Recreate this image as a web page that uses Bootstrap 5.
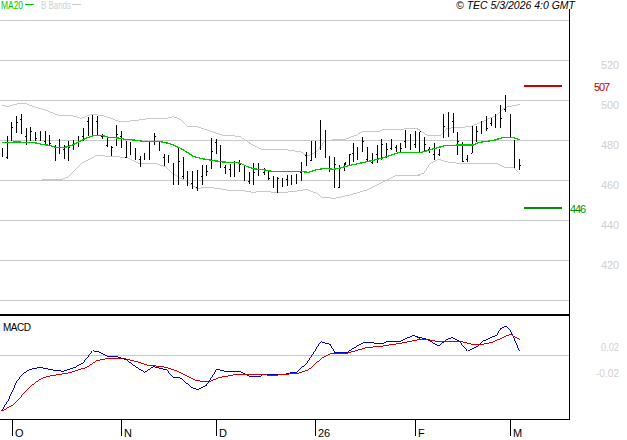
<!DOCTYPE html>
<html lang="en">
<head>
<meta charset="utf-8">
<title>TEC chart</title>
<link href="https://cdn.jsdelivr.net/npm/bootstrap@5.3.0/dist/css/bootstrap.min.css" rel="stylesheet">
<style>
html,body{background:#fff;margin:0;overflow:hidden}
.chart-frame{width:627px;height:440px}
.chart-svg{width:627px;height:440px}
.chart-svg text{font-family:"Liberation Sans",Arial,sans-serif;font-size:11px}
.chart-svg .lineart{shape-rendering:crispEdges;fill:none}
.chart-svg .tx-small{font-size:10px}
.tx-grey{fill:#d0d0d0}
.tx-black{fill:#000}
.grid-ln{stroke:#c8c8c8;stroke-width:1}
.ax-ln{stroke:#000;stroke-width:1}
.ax-thick{stroke:#000;stroke-width:2}
.band{stroke:#c8c8c8;stroke-width:3;fill:none}
.ma{stroke:#00c800;stroke-width:3.9;fill:none}
.blue-ln{stroke:#0000c8;stroke-width:3;fill:none}
.red-ln{stroke:#c80000;stroke-width:3;fill:none}
.bars{stroke:#000;stroke-width:3;fill:none}
</style>
</head>
<body>
<div class="container-fluid p-0 chart-frame">
<svg class="chart-svg d-block" viewBox="0 0 627 440" xmlns="http://www.w3.org/2000/svg">
  <g class="lineart">
    <path class="grid-ln" d="M0 20.5H569M0 60.5H569M0 100.5H569M0 140.5H569M0 180.5H569M0 220.5H569M0 260.5H569M0 300.5H569M0 355.5H569"/>
    <!-- upper band -->
    <g transform="scale(.3333)"><polyline class="band" points="5,316 22,320 50,312 75,310 100,320 135,330 175,346 215,347 245,355 275,343 310,347 360,365 405,362 450,355 500,355 520,350 540,358 560,378 590,380 630,393"/></g>
    <g transform="translate(210 0) scale(.3333)"><polyline class="band" points="0,393 40,406 90,409 120,430 155,448 185,449"/><polyline class="band" points="365,418 405,418 440,405 460,394 510,394 515,390 565,390 600,384 630,388"/></g>
    <g transform="translate(210 130) scale(.3333)"><polyline class="band" points="115,38 155,58 220,58 270,65 295,78 320,65 345,32"/></g>
    <g transform="translate(417 0) scale(.3333)"><polyline class="band" points="0,387 30,405 70,408 90,385 160,380 190,368 240,345 265,322 310,313"/></g>
    <!-- lower band -->
    <g transform="translate(0 130) scale(.3333)"><polyline class="band" points="45,152 87,152 145,149 185,149 205,140 245,100 290,76 340,80 380,82 420,102 465,100 500,112 520,132 560,155 590,175 630,172"/></g>
    <g transform="translate(210 130) scale(.3333)"><polyline class="band" points="0,172 50,180 100,182 130,187 160,184 205,188 250,185 290,178 320,190 335,202 375,205 420,195 470,180 520,155 555,138 600,136 630,136"/></g>
    <g transform="translate(417 130) scale(.3333)"><polyline class="band" points="0,136 20,130 40,100 65,88 95,97 150,102 240,100 262,112 290,114 310,133"/></g>
    <!-- price bars -->
    <g transform="translate(0 108) scale(.3333)"><path class="bars" d="M8 120V147M5 142h3M22 83V152M19 150h3M36 43V98M33 98h3M36 60h3M51 25V76M51 45h3M64 18V77M61 35h3M64 55h3M79 60V112M76 85h3M93 58V98M93 70h3M90 85h3M108 72V100M105 82h3M108 92h3M122 70V98M119 85h3M136 70V115M133 100h3M150 82V112M147 98h3M150 108h3M166 110V158M163 118h3M180 92V138M177 110h3M193 110V152M190 125h3M207 100V158M204 148h3M207 118h3M222 97V125M219 105h3M236 85V118M233 100h3M250 60V100M247 85h3M265 27V85M265 70h3M262 40h3M278 22V85M275 40h3M292 25V85M289 42h3M307 78V92M304 85h3M322 85V118M319 112h3M322 98h3M335 115V143M335 120h3M350 52V112M347 112h3M350 80h3M364 68V120M361 85h3M364 100h3M379 100V150M376 148h3M379 118h3M392 102V140M389 125h3M407 120V155M404 140h3M421 145V178M418 155h3M421 158h3M435 135V155M432 148h3M449 100V155M446 155h3M464 75V112M461 100h3M464 85h3M478 100V128M475 100h3M478 118h3M493 138V175M490 148h3M507 142V165M504 155h3M521 165V230M518 170h3M536 120V230M533 215h3M536 160h3"/></g>
    <g transform="translate(170 108) scale(.3333)"><path class="bars" d="M40 148V212M37 205h3M40 160h3M53 190V235M50 225h3M67 190V243M67 210h3M64 228h3M82 185V248M79 238h3M97 170V230M94 205h3M110 170V205M107 180h3M110 190h3M125 90V182M122 180h3M125 130h3M139 92V138M136 105h3M152 112V180M149 112h3M166 170V197M163 180h3M181 168V207M178 185h3M195 160V207M192 180h3M209 157V192M206 185h3M209 170h3M223 172V220M223 210h3M238 192V228M235 220h3M252 165V230M249 225h3M252 195h3M266 165V205M263 195h3M283 180V200M280 195h3M296 187V217M296 213h3M311 205V240M308 222h3M323 207V255M323 212h3M338 210V237M335 215h3M352 200V235M349 215h3M366 200V230M363 212h3M380 197V228M377 212h3M394 162V218M391 195h3M409 132V175M406 142h3M409 158h3M424 100V160M421 158h3M424 102h3M438 100V150M435 132h3M451 37V125M451 65h3M466 65V150M466 148h3M480 145V192M477 152h3M494 148V240M491 240h3M494 170h3M508 170V240M505 238h3M523 165V190M523 175h3M538 140V175M535 172h3"/></g>
    <g transform="translate(345 90) scale(.3333)"><path class="bars" d="M0 215V225M-3 222h3M14 192V228M11 222h3M14 195h3M25 158V215M22 190h3M39 172V210M36 185h3M53 140V187M53 155h3M50 180h3M67 172V215M64 210h3M82 188V223M79 218h3M82 195h3M97 165V220M94 195h3M111 148V210M108 205h3M111 165h3M125 160V205M125 180h3M139 148V180M136 175h3M139 160h3M154 165V187M151 172h3M167 160V185M167 175h3M181 120V175M178 155h3M196 132V180M196 142h3M211 123V175M208 165h3M211 140h3M225 125V185M222 180h3M225 125h3M239 142V185M239 165h3M253 170V190M250 180h3M268 158V210M265 195h3M268 162h3M283 178V198M280 195h3M297 72V145M294 140h3M297 110h3M311 67V142M308 95h3M325 68V130M322 95h3M339 127V195M339 155h3M353 155V215M353 215h3M350 170h3M367 195V217M364 210h3M382 108V190M379 190h3M396 107V157M396 125h3M410 92V132M407 105h3M425 77V122M425 115h3M439 85V108M436 100h3M453 72V115M450 100h3M467 45V115M464 55h3M467 85h3M481 15V67M478 60h3M481 50h3M496 72V140M496 135h3M510 150V235M507 222h3M524 208V240M521 235h3M524 228h3"/></g>
    <!-- MA20 -->
    <g transform="translate(0 108) scale(.3333)"><polyline class="ma" points="5,103 20,104 45,102 85,103 110,105 130,110 150,112 165,118 195,118 215,112 240,100 265,88 285,82 305,82 325,88 355,90 375,94 400,96 430,100 480,101 510,107 540,120"/></g>
    <g transform="translate(170 108) scale(.3333)"><polyline class="ma" points="25,117 50,132 70,145 95,152 125,157 160,162 210,165 230,175 255,183 285,186 305,190 390,190 415,193 440,185 465,181 490,184 515,179 540,172"/></g>
    <g transform="translate(345 90) scale(.3333)"><polyline class="ma" points="15,226 35,222 80,212 110,205 135,197 165,187 230,187 270,175 300,167 345,165 385,165 400,158 450,150 475,142 505,142 523,150"/></g>
    <!-- MACD -->
    <g transform="translate(0 310) scale(.3333)">
      <polyline class="red-ln" points="5,303 40,285 90,230 125,205 150,198 210,188 260,172 290,152 320,146 375,146 420,158 445,166 490,170 530,182 590,212 630,216"/>
      <polyline class="blue-ln" points="5,303 25,270 50,215 70,190 90,178 120,172 160,180 190,184 225,172 250,158 278,122 300,127 325,140 350,140 380,150 410,172 435,187 460,170 500,180 520,202 540,203 580,236 595,238 620,225 630,210"/>
    </g>
    <g transform="translate(210 310) scale(.3333)">
      <polyline class="blue-ln" points="0,210 20,178 55,186 90,184 115,198 150,199 160,193 225,193 235,190 260,186 290,160 310,130 332,95 360,103 375,128 410,128 430,115 460,98 520,100 530,94 570,94 610,76 630,85"/>
      <polyline class="red-ln" points="0,214 30,202 70,195 135,194 155,193 185,197 225,193 265,190 295,180 335,145 365,130 410,130 470,113 520,108 570,100 610,92 630,88"/>
    </g>
    <g transform="translate(417 310) scale(.3333)">
      <polyline class="blue-ln" points="0,80 30,88 65,108 90,88 107,83 125,92 152,124 180,110 195,95 240,75 250,57 265,48 280,60 308,124"/>
      <polyline class="red-ln" points="0,90 30,88 60,94 130,94 165,103 195,103 225,97 280,73 308,88"/>
    </g>
    <!-- axes -->
    <path class="ax-thick" d="M0 315H570"/>
    <path class="ax-ln" d="M569.5 9V420M0 419.5H570M12.5 420V436M121.5 420V436M216.5 420V436M315.5 420V436M415.5 420V436M510.5 420V436"/>
    <!-- legend dashes and target levels -->
    <path stroke="#00c800" d="M25 4.5H34"/>
    <path stroke="#c8c8c8" d="M72 4.5H81"/>
    <path stroke="#c80000" stroke-width="2" d="M524 86H562"/>
    <path stroke="#009000" stroke-width="2" d="M524 208H562"/>
  </g>
  <text x="1" y="9" class="tx-small" fill="#00c800" textLength="22" lengthAdjust="spacingAndGlyphs">MA20</text>
  <text x="41" y="9" class="tx-small tx-grey" textLength="30" lengthAdjust="spacingAndGlyphs">B Bands</text>
  <text x="456" y="9" class="tx-small tx-black" font-style="italic" textLength="119" lengthAdjust="spacingAndGlyphs">© TEC 5/3/2026 4:0 GMT</text>
  <text x="601" y="69" class="tx-grey" textLength="18">520</text>
  <text x="594" y="91" fill="#b80000" textLength="16">507</text>
  <text x="601" y="109" class="tx-grey" textLength="18">500</text>
  <text x="601" y="149" class="tx-grey" textLength="18">480</text>
  <text x="601" y="189" class="tx-grey" textLength="18">460</text>
  <text x="570" y="213" fill="#009000" textLength="16">446</text>
  <text x="601" y="229" class="tx-grey" textLength="18">440</text>
  <text x="601" y="269" class="tx-grey" textLength="18">420</text>
  <text x="3" y="331" class="tx-small tx-black" textLength="28" lengthAdjust="spacing">MACD</text>
  <text x="601" y="351" class="tx-grey" textLength="18" lengthAdjust="spacingAndGlyphs">0.02</text>
  <text x="596" y="377" class="tx-grey" textLength="23" lengthAdjust="spacingAndGlyphs">-0.02</text>
  <text x="15" y="437" class="tx-black">O</text>
  <text x="124" y="437" class="tx-black">N</text>
  <text x="219" y="437" class="tx-black">D</text>
  <text x="318" y="437" class="tx-black">26</text>
  <text x="418" y="437" class="tx-black">F</text>
  <text x="513" y="437" class="tx-black">M</text>
</svg>
</div>
<script src="https://cdn.jsdelivr.net/npm/bootstrap@5.3.0/dist/js/bootstrap.bundle.min.js"></script>
</body>
</html>
